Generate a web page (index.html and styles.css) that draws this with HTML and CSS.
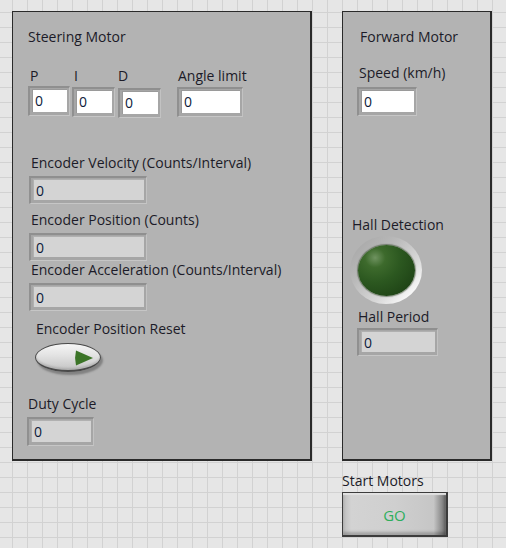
FILE: index.html
```html
<!DOCTYPE html>
<html>
<head>
<meta charset="utf-8">
<link rel="stylesheet" href="styles.css">
</head>
<body>
<div class="page">
  <section class="panel steer">
    <div class="title">Steering Motor</div>
    <div class="pid-row">
      <div class="ctl ctl-p">
        <div class="lbl">P</div>
        <div class="num num-p"><span class="field">0</span></div>
      </div>
      <div class="ctl ctl-i">
        <div class="lbl">I</div>
        <div class="num num-i"><span class="field">0</span></div>
      </div>
      <div class="ctl ctl-d">
        <div class="lbl lbl-d">D</div>
        <div class="num num-d"><span class="field">0</span></div>
      </div>
      <div class="ctl ctl-angle">
        <div class="lbl">Angle limit</div>
        <div class="num num-angle"><span class="field">0</span></div>
      </div>
    </div>

    <div class="ind-group enc-vel">
      <div class="lbl">Encoder Velocity (Counts/Interval)</div>
      <div class="ind ind-wide"><span class="field">0</span></div>
    </div>
    <div class="ind-group enc-pos">
      <div class="lbl">Encoder Position (Counts)</div>
      <div class="ind ind-wide"><span class="field">0</span></div>
    </div>
    <div class="ind-group enc-acc">
      <div class="lbl">Encoder Acceleration (Counts/Interval)</div>
      <div class="ind ind-wide"><span class="field">0</span></div>
    </div>

    <div class="reset-group">
      <div class="lbl">Encoder Position Reset</div>
      <div class="pill">
        <svg class="play" width="20" height="16" viewBox="0 0 20 16">
          <path d="M2 0.5 Q0.2 8 2 15.5 L19 8 Z" fill="#3b7427"/>
        </svg>
      </div>
    </div>

    <div class="ind-group duty">
      <div class="lbl">Duty Cycle</div>
      <div class="ind ind-duty"><span class="field">0</span></div>
    </div>
  </section>

  <div class="right-col">
    <section class="panel forward">
      <div class="title title-fwd">Forward Motor</div>
      <div class="ctl speed">
        <div class="lbl">Speed (km/h)</div>
        <div class="num num-speed"><span class="field">0</span></div>
      </div>
      <div class="hall">
        <div class="lbl">Hall Detection</div>
        <div class="led-ring"><div class="led"></div></div>
      </div>
      <div class="ind-group hall-period">
        <div class="lbl">Hall Period</div>
        <div class="ind ind-hall"><span class="field">0</span></div>
      </div>
    </section>
    <div class="start">
      <div class="lbl">Start Motors</div>
      <div class="go-btn">GO</div>
    </div>
  </div>
</div>
</body>
</html>
```

FILE: styles.css
```css
html {
  background-color: #e6e6e6;
  background-image:
    linear-gradient(to right, #d2d2d2 1px, transparent 1px),
    linear-gradient(to bottom, #d2d2d2 1px, transparent 1px);
  background-size: 15px 15px;
  background-position: 12px 12px;
}
body {
  margin: 0;
  font-family: "Open Sans", "Noto Sans", sans-serif;
  font-size: 14px;
  line-height: 16px;
  color: #1c1b28;
}
.page {
  display: flex;
  align-items: flex-start;
  padding: 11px 0 0 12px;
}
.panel {
  box-sizing: border-box;
  background: #b3b3b3;
  border-style: solid;
  border-color: #2a2a2a;
  border-width: 1px 2px 2px 1px;
  display: flex;
  flex-direction: column;
  align-items: flex-start;
}
.steer { width: 300px; height: 450px; }
.right-col {
  margin-left: 30px;
  display: flex;
  flex-direction: column;
  align-items: flex-start;
}
.forward { width: 150px; height: 450px; }

.lbl { white-space: nowrap; }
.title { margin: 17px 0 0 15px; }
.title-fwd { margin-left: 17px; }

/* numeric controls */
.pid-row {
  display: flex;
  align-items: flex-start;
  margin: 23px 0 0 15px;
}
.ctl { display: flex; flex-direction: column; align-items: flex-start; }
.ctl .lbl { padding-left: 2px; }
.ctl-i { margin-left: 2px; }
.ctl-d { margin-left: 3px; }
.ctl-d .lbl { padding-left: 0; }
.ctl-angle { margin-left: 16px; }
.ctl-angle .lbl { padding-left: 1px; }

.num, .ind {
  box-sizing: border-box;
  height: 30px;
  background: #a6a6a6;
  border-style: solid;
  border-width: 2px 1px 1px 2px;
  border-color: #8f8f8f #c2c2c2 #c6c6c6 #909090;
  padding: 1px 2px 3px 2px;
  display: flex;
}
.num { margin-top: 2px; }
.ctl-i .num { margin-top: 3px; }
.ctl-d .num { margin-top: 4px; }
.ctl-angle .num { margin-top: 3px; }
.num-p { width: 42px; }
.num-i { width: 43px; }
.num-d { width: 43px; }
.num-angle { width: 66px; }
.num-speed { width: 60px; height: 29px; margin-top: 6px; }
.speed { margin: 20px 0 0 14px; }

.field {
  flex: 1;
  background: #ffffff;
  box-shadow: inset 1px 1px 0 #9a9a9a;
  color: #0d1a3a;
  padding: 4px 0 0 3px;
  line-height: 16px;
}
.ind .field { background: #d4d4d4; box-shadow: inset 1px 1px 0 #b0b0b0; }

/* indicators */
.ind-group { display: flex; flex-direction: column; align-items: flex-start; }
.ind-group .lbl { padding-left: 2px; }
.ind { height: 28px; margin-top: 5px; }
.ind-wide { width: 118px; }
.enc-vel { margin: 37px 0 0 16px; }
.enc-pos { margin: 8px 0 0 16px; }
.enc-acc { margin: 1px 0 0 16px; }
.duty { margin: 0 0 0 14px; }
.duty .lbl { padding-left: 1px; }
.ind-duty { width: 67px; height: 29px; }

/* reset pill button */
.reset-group {
  margin: 10px 0 0 22px;
  display: flex;
  flex-direction: column;
  align-items: flex-start;
  height: 75px;
}
.reset-group .lbl { padding-left: 1px; }
.pill {
  box-sizing: border-box;
  position: relative;
  width: 66px;
  height: 29px;
  margin-top: 6px;
  border-radius: 50%;
  border: 1px solid #4a4a4a;
  border-bottom-width: 2px;
  background: linear-gradient(to bottom, #f6f6f6 0%, #e2e2e2 45%, #c4c4c4 100%);
  box-shadow: 2px 3px 2px rgba(0, 0, 0, 0.28), inset 0 -2px 2px rgba(0,0,0,0.12);
}
.play { position: absolute; left: 38px; top: 6px; }

/* hall detection LED */
.hall { margin: 101px 0 0 8px; display: flex; flex-direction: column; align-items: flex-start; }
.hall .lbl { padding-left: 1px; }
.led-ring {
  box-sizing: border-box;
  width: 72px;
  height: 68px;
  margin: 3px 0 0 -1px;
  border-radius: 50%;
  background: linear-gradient(135deg, #a3a3a3 0%, #b9b9b9 35%, #d8d8d8 65%, #f7f7f7 85%, #d0d0d0 100%);
  padding: 9px 0 0 8px;
}
.led {
  width: 57px;
  height: 51px;
  border-radius: 50%;
  background: radial-gradient(ellipse at 30% 25%, #6f9360 0%, #3d6a2c 18%, #2c5820 45%, #1f4416 80%, #16330f 100%);
  box-shadow: 0 0 1px 1px rgba(40, 60, 30, 0.5);
}
.hall-period { margin: 5px 0 0 14px; }
.hall-period .lbl { padding-left: 1px; }
.ind-hall { width: 81px; margin-top: 3px; }

/* start button */
.start { margin-top: 12px; display: flex; flex-direction: column; align-items: flex-start; }
.go-btn {
  box-sizing: border-box;
  width: 106px;
  height: 45px;
  margin-top: 3px;
  border: 1px solid #3c3c3c;
  border-width: 1px 2px 2px 1px;
  background: linear-gradient(to right, #bdbdbd 0%, #d3d3d3 8%, #cfcfcf 50%, #c6c6c6 88%, #8a8a8a 96%, #5e5e5e 100%);
  box-shadow: inset 0 2px 1px #e2e2e2, inset 0 -3px 3px rgba(0,0,0,0.22);
  display: flex;
  align-items: center;
  justify-content: center;
  color: #2eae5c;
  font-size: 15px;
  padding-top: 1px;
}
```
